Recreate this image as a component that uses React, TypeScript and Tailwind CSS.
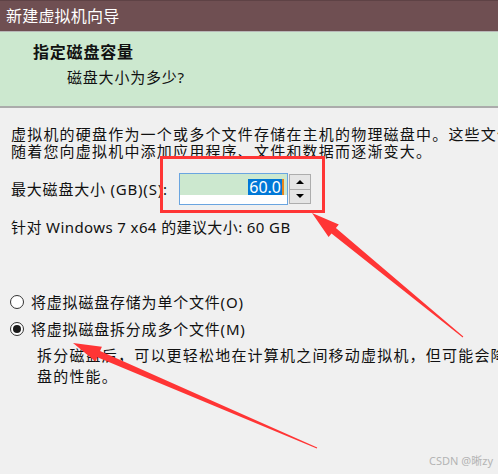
import React from 'react';

const font = "font-['Noto_Sans','Noto_Sans_CJK_SC',sans-serif]";

const Radio: React.FC<{ checked?: boolean; label: string }> = ({ checked, label }) => (
  <div className="flex items-center h-[20px]">
    <span className="w-[14px] h-[14px] rounded-full border border-[#333] bg-white flex items-center justify-center ml-[10px]">
      {checked && <span className="w-[8px] h-[8px] rounded-full bg-[#1a1a1a]" />}
    </span>
    <span className="ml-[7px]">{label}</span>
  </div>
);

export default function App() {
  return (
    <div className={`relative w-[498px] h-[474px] overflow-hidden bg-[#f0f0f0] text-[#111] text-[15px] tracking-[0.8px] ${font}`}>
      {/* title bar */}
      <div className="h-[31px] bg-[#6f4f52] text-white text-[16px] tracking-[0.2px] flex items-center pl-[6px] border-t border-[#5e4245]">
        新建虚拟机向导
      </div>
      <div className="h-px bg-[#b8b8b8]" />

      {/* header */}
      <div className="h-[76px] bg-[#cce8cf] border-b-2 border-[#ababab] pt-[9px]">
        <div className="pl-[33px] font-bold text-[16px] leading-[22px] tracking-[0.8px]">指定磁盘容量</div>
        <div className="pl-[67px] leading-[22px] mt-[3px]">磁盘大小为多少?</div>
      </div>

      {/* body */}
      <div className="pl-[11px] whitespace-nowrap">
        <div className="mt-[18px] leading-[17px] tracking-[1.2px]">
          <div>虚拟机的硬盘作为一个或多个文件存储在主机的物理磁盘中。这些文件</div>
          <div>随着您向虚拟机中添加应用程序、文件和数据而逐渐变大。</div>
        </div>

        <div className="flex items-center mt-[13px] h-[32px]">
          <span className="w-[168px]">最大磁盘大小 (GB)(S):</span>
          <div className="w-[109px] h-[32px] border border-[#6aa5e0] bg-white flex flex-col">
            <div className="h-[21px] bg-[#cce8cf] flex items-end justify-end pr-[3px]">
              <span className="bg-[#0078d7] text-white text-[16px] h-[16px] leading-[16px] px-[1px] tracking-normal border-r-2 border-[#e8871e]">60.0</span>
            </div>
          </div>
          <div className="w-[22px] h-[30px] flex flex-col ml-px">
            <div className="flex-1 bg-[#e5e5e5] border border-[#adadad] flex items-center justify-center">
              <span className="w-0 h-0 border-l-[4px] border-r-[4px] border-b-[4px] border-l-transparent border-r-transparent border-b-black" />
            </div>
            <div className="flex-1 bg-[#e5e5e5] border border-t-0 border-[#adadad] flex items-center justify-center">
              <span className="w-0 h-0 border-l-[4px] border-r-[4px] border-t-[4px] border-l-transparent border-r-transparent border-t-black" />
            </div>
          </div>
        </div>

        <div className="mt-[13px] leading-[18px] tracking-[0.4px]">针对 Windows 7 x64 的建议大小: 60 GB</div>
      </div>

      <div className="mt-[56px] whitespace-nowrap">
        <Radio label="将虚拟磁盘存储为单个文件(O)" />
        <div className="mt-[7px]">
          <Radio checked label="将虚拟磁盘拆分成多个文件(M)" />
        </div>
        <div className="pl-[37px] mt-[6px] leading-[21px] tracking-[1.2px]">
          <div>拆分磁盘后，可以更轻松地在计算机之间移动虚拟机，但可能会降低大容量磁</div>
          <div>盘的性能。</div>
        </div>
      </div>

      {/* watermark */}
      <div className="absolute right-[5px] bottom-[5px] text-[11px] tracking-normal text-[#b4b4b4]">CSDN @晰zy</div>

      {/* annotation box */}
      <div className="absolute left-[160px] top-[156px] w-[165px] h-[57px] border-[3px] border-[#ff3535]" />

      {/* annotation arrows */}
      <svg className="absolute inset-0" width="498" height="474" viewBox="0 0 498 474">
        <polygon
          fill="#ff3535"
          points="312,213 338.8,224.6 335.9,228.1 463.3,336.6 462.7,337.4 331.5,233.5 328.6,237"
        />
        <polygon
          fill="#ff3535"
          points="73,343 101.9,346.7 100.1,350.9 317.2,447.4 316.8,448.6 97.3,357.3 95.5,361.5"
        />
      </svg>
    </div>
  );
}
